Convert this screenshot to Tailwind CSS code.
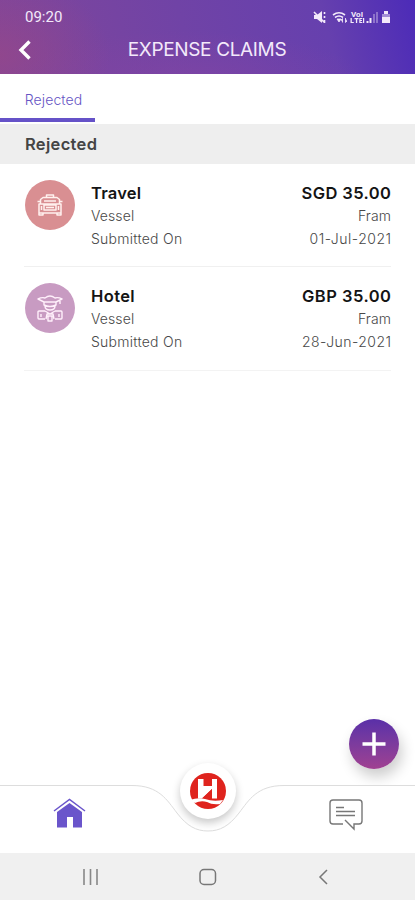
<!DOCTYPE html>
<html lang="en">
<head>
<meta charset="utf-8">
<title>Expense Claims</title>
<script src="https://cdn.jsdelivr.net/npm/@tailwindcss/browser@4"></script>
</head>
<body class="bg-white">
<div class="relative flex h-[900px] w-[415px] flex-col overflow-hidden bg-white font-['Inter','Liberation_Sans',sans-serif]">
  <header class="flex h-[74px] shrink-0 flex-col bg-[radial-gradient(ellipse_110px_80px_at_0%_75%,#9b478599,transparent),radial-gradient(ellipse_180px_50px_at_45%_110%,#8545a490,transparent),linear-gradient(75deg,#80469a_0%,#7043a6_45%,#6640ae_78%,#4c2bb8_100%)] text-[#f3e9fa]">
    <div class="flex h-[34px] items-center justify-between pr-[23px] pl-[25px]">
      <span class="pt-[1px] font-[Roboto,sans-serif] text-[15px] leading-none">09:20</span>
      <svg class="h-4 w-[80px]" viewBox="0 0 80 16" fill="#f3e9fa">
        <path d="M2 6h3l5-4v12l-5-4H2z"/><path d="M2 3l10 10M12.500 3v2m0 2v2m0 2V14" stroke="#f3e9fa" stroke-width="1.600"/>
        <path d="M21 6q6-4.500 12 0M23 8.500q4-3 8 0" fill="none" stroke="#f3e9fa" stroke-width="1.600"/><path d="M25 10h4l-2 3zM30.500 13.500v-4l-1.500 1.500M33.500 9v4.500l1.500-1.500" stroke="#f3e9fa" stroke-width=".8"/>
        <text x="39" y="7.500" font-family="Roboto" font-size="7" font-weight="700" textLength="12" lengthAdjust="spacingAndGlyphs">VoI</text><path d="M38.500 9h1.300v4h2v1h-3.300zM42.500 9h4v1.200h-1.300V14h-1.300v-3.800h-1.400zM47.300 9h3v1h-1.800v1h1.500v1h-1.500v1h1.800v1h-3zM51 9h1.200v5H51z"/>
        <path d="M54.500 12h2v2h-2zM57.500 9h2v5h-2z"/><path d="M61 5h2v9h-2zM64 3h2v11h-2z" opacity=".35"/>
        <path d="M72 2h4v3h-4z"/><path d="M70 5h8v3h-8z" opacity=".5"/><path d="M70 8h8v6h-8z"/>
      </svg>
    </div>
    <div class="relative flex h-[30px] items-center justify-center pr-[1px]">
      <svg class="absolute top-[6px] left-[18px] h-5 w-[14px]" viewBox="0 0 14 20" fill="none" stroke="#fff" stroke-width="3.400"><path d="M11.500 1.500L3 10l8.500 8.500"/></svg>
      <h1 class="pt-[1px] text-[19px] leading-[30px] tracking-[-0.35px]">EXPENSE CLAIMS</h1>
    </div>
  </header>

  <nav class="flex h-[50px] shrink-0">
    <div class="flex h-12 w-[95px] items-center justify-center border-b-4 border-[#6552c8] pt-[6px] pl-[12px] text-[14px] font-light tracking-[0.1px] text-[#6654c4]">Rejected</div>
  </nav>
  <h2 class="flex h-10 shrink-0 items-center bg-[#eeeeee] pl-[25px] text-[16.500px] font-semibold tracking-[0.32px] text-[#444]">Rejected</h2>

  <main class="px-6">
    <article class="flex h-[103px] border-b border-[#f0f0f0] pt-4 pl-[1px]">
      <div class="flex size-[50px] items-center justify-center rounded-full bg-[#d98f92]">
        <svg class="h-[24px] w-[28px]" viewBox="0 0 28 24" fill="none" stroke="#fff1ee" stroke-width="1.500" stroke-linejoin="round"><path d="M10.500 4.500V2h7v2.500M4.500 11V6.500L7 4.500h14l2.500 2V11M3 11h22v9H3zM3 20v2h4v-2M21 20v2h4v-2M1.500 8.500h3M23.500 8.500h3M8 8h12M8 12h12v5H8zM10 14.500h8M5.500 13v4M22.500 13v4"/></svg>
      </div>
      <div class="ml-4 flex flex-1 flex-col text-[14px] leading-[23px] font-light text-[#484848]">
        <div class="flex justify-between pt-[2px] text-[16.500px] leading-[22px] font-semibold text-[#141414]"><span class="tracking-[0.2px]">Travel</span><span class="-mr-[0.4px] tracking-[0.4px]">SGD 35.00</span></div>
        <div class="-mt-[0.5px] flex justify-between"><span class="tracking-[0.1px]">Vessel</span><span class="tracking-[0.1px]">Fram</span></div>
        <div class="flex justify-between"><span class="tracking-[0.26px]">Submitted On</span><span class="-mr-[0.5px] tracking-[0.5px]">01-Jul-2021</span></div>
      </div>
    </article>
    <article class="flex h-[104px] border-b border-[#f3f3f3] pt-4 pl-[1px]">
      <div class="flex size-[50px] items-center justify-center rounded-full bg-[#c89bc2]">
        <svg class="h-[28px] w-[28px]" viewBox="0 0 28 28" fill="none" stroke="#fff0fb" stroke-width="1.400" stroke-linejoin="round"><path d="M8 8L2 5q4-2 7-1 5-4 10 0 3-1 7 1l-6 3zM8 8v3q6 3 12 0V8M9 12q0 4 5 4t5-4M9 17H3q-1 0-1 1v6q0 1 1 1h6M19 17h6q1 0 1 1v6q0 1-1 1h-6M9 17l5 3 5-3M10 25l1-5h6l1 5M12 22h4v5h-4zM5 20v3M23 20v3M24 6v4"/></svg>
      </div>
      <div class="ml-4 flex flex-1 flex-col text-[14px] leading-[23px] font-light text-[#484848]">
        <div class="flex justify-between pt-[2px] text-[16.500px] leading-[22px] font-semibold text-[#141414]"><span class="tracking-[0.4px]">Hotel</span><span class="-mr-[0.5px] tracking-[0.5px]">GBP 35.00</span></div>
        <div class="-mt-[0.5px] flex justify-between"><span class="tracking-[0.1px]">Vessel</span><span class="tracking-[0.1px]">Fram</span></div>
        <div class="flex justify-between"><span class="tracking-[0.26px]">Submitted On</span><span class="-mr-[0.4px] tracking-[0.45px]">28-Jun-2021</span></div>
      </div>
    </article>
  </main>

  <button class="absolute top-[719px] left-[349px] flex size-[50px] items-center justify-center rounded-full bg-linear-to-b from-[#5a2fa8] to-[#a04091] shadow-[3px_8px_14px_rgba(0,0,0,0.2)]" aria-label="Add claim">
    <svg class="size-6" viewBox="0 0 24 24" stroke="#fff" stroke-width="3.500"><path d="M12 .5v23M.5 12h23"/></svg>
  </button>

  <footer class="relative mt-auto shrink-0">
    <div class="relative h-[69px]">
      <svg class="absolute inset-0 h-[69px] w-[415px]" viewBox="0 0 415 69" fill="#fff" stroke="#dddddd"><path d="M-1 1.500H132C159 1.500 167 16 177 29 187 42 196 47 208 47S229 42 239 29C249 16 257 1.500 284 1.500H416V71H-1Z"/></svg>
      <div class="relative flex h-full items-start justify-between pr-[52px] pl-[53px]">
        <svg class="mt-[14px] h-[31px] w-[33px]" viewBox="0 0 33 31" fill="#6a55cb"><path d="M4 14L16.500 5 29 14v15.500H20V19h-6v10.500H4z"/><path d="M1 13L16.500 1.500 32 13" fill="none" stroke="#6a55cb" stroke-width="1.500"/></svg>
        <svg class="mt-[15px] h-[32px] w-[34px]" viewBox="0 0 34 32" fill="none" stroke="#777" stroke-width="1.400"><path d="M14 25H4q-3 0-3-3V4q0-3 3-3h26q3 0 3 3v18q0 3-3 3h-5v5L16 21"/><path d="M7 8.500h8M7 12.500h19M7 16.500h19"/></svg>
      </div>
    </div>
    <div class="absolute top-[-21px] left-[180px] flex size-[56px] items-center justify-center rounded-full bg-white shadow-[0_4px_9px_rgba(0,0,0,0.22)]">
      <svg class="size-9" viewBox="0 0 36 36"><circle cx="18" cy="18" r="18" fill="#df241e"/><path d="M8 6h5.500v7H22V6h5v19.500h-5V16l-10 9.500H8z" fill="#fff"/><path d="M22 16v9.500H12z" fill="#df241e"/><path d="M0 27q8-3 15-1 8 3 18 1l-3 4q-8 1-13-2-6-2-12 1z" fill="#fff"/><path d="M7 29.500q6-1 10 1.500 5 2 10 1-6 4-13 2-4-1-7-4.500z" fill="#df241e"/></svg>
    </div>
    <div class="flex h-[47px] items-center justify-between bg-[#f0f0f0] pr-[87px] pl-[82px]">
      <svg class="h-4 w-[17px]" viewBox="0 0 17 16" stroke="#888" stroke-width="1.600"><path d="M2 0v16M8.500 0v16M15 0v16"/></svg>
      <svg class="relative -left-[1px] h-[18px] w-[18px]" viewBox="0 0 18 18" fill="none" stroke="#777" stroke-width="1.500"><rect x="1" y="1.500" width="15.500" height="15" rx="4"/></svg>
      <svg class="h-4 w-[10px]" viewBox="0 0 10 16" fill="none" stroke="#777" stroke-width="1.500"><path d="M9 1L2 8l7 7"/></svg>
    </div>
  </footer>
</div>
</body>
</html>
